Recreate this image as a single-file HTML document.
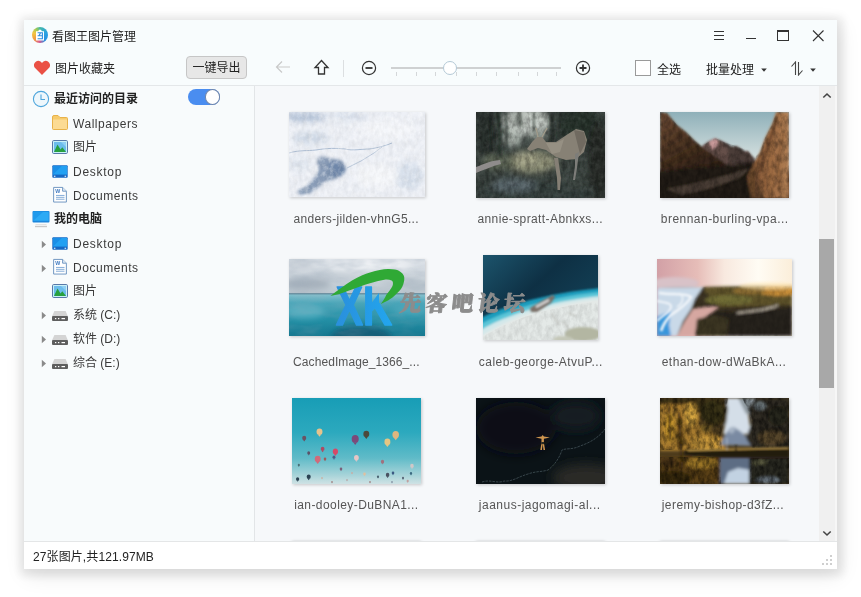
<!DOCTYPE html>
<html lang="zh-CN">
<head>
<meta charset="utf-8">
<title>看图王图片管理</title>
<style>
*{box-sizing:border-box;margin:0;padding:0}
html,body{width:861px;height:597px;overflow:hidden;background:#fff}
body{font-family:"Liberation Sans","Noto Sans CJK SC",sans-serif;font-size:12px;color:#333;position:relative}
.abs{position:absolute}
#win{will-change:transform;position:absolute;left:24px;top:20px;width:813px;height:549px;background:#f8fcfd;box-shadow:1px 2px 9px 5px rgba(0,0,0,.085),2px 6px 20px rgba(0,0,0,.10);overflow:hidden}
#top{position:absolute;left:0;top:0;width:813px;height:66px;background:#f8fcfd;border-bottom:1px solid #e4e7e9}
#side{position:absolute;left:0;top:66px;width:231px;height:455px;background:#f8fbfc;border-right:1px solid #e2e5e7}
#main{position:absolute;left:231px;top:66px;width:564px;height:455px;background:#f6f8fa;overflow:hidden}
#sbar{position:absolute;left:795px;top:66px;width:18px;height:455px;background:#f0f0f0;border-right:2px solid #f6f6f6}
#sthumb{position:absolute;left:0;top:153px;width:15px;height:149px;background:#a8a8a8}
#status{position:absolute;left:0;top:521px;width:813px;height:28px;background:#fff;border-top:1px solid #e4e6e7}
.t{position:absolute;white-space:nowrap;line-height:16px;height:16px}
.b{font-weight:bold;color:#222}
.lat{letter-spacing:.55px}
.row{position:absolute;left:0;width:230px;height:24px;color:#3a3a3a}
.lbl{position:absolute;width:180px;text-align:center;white-space:nowrap;line-height:16px;color:#555;letter-spacing:.45px;font-size:12px}
.th{position:absolute;box-shadow:1px 1px 3px rgba(0,0,0,.2);overflow:hidden}
.th svg{display:block}
</style>
</head>
<body>
<div id="win">
  <div id="top">
    <!-- app icon -->
    <div class="abs" style="left:8px;top:6.500px;width:16px;height:16px;border-radius:50%;background:conic-gradient(from 0deg,#45b8a8 0deg,#2aa2e2 70deg,#2a90e0 140deg,#d85a90 185deg,#f09a40 230deg,#f2c744 290deg,#8cc860 335deg,#45b8a8 360deg)"></div>
    <svg class="abs" style="left:8px;top:6.500px" width="16" height="16" viewBox="0 0 16 16">
      <path d="M4 4.200h2.200l.8-1.400h2l.8 1.400H12v9.300H4Z" fill="#fff"/>
      <path d="M5.600 5.800h4.800v6H5.600M5.600 8.800h4.800M8.600 5.800l-1.600 3" fill="none" stroke="#2f8fe0" stroke-width="1.100"/>
    </svg>
    <div class="t" style="left:28px;top:8.500px;color:#222">看图王图片管理</div>
    <!-- window buttons -->
    <svg class="abs" style="left:686px;top:8px" width="120" height="18" viewBox="0 0 120 18">
      <g stroke="#333" stroke-width="1" fill="none" shape-rendering="crispEdges">
        <path d="M4 3.5h10M4 7.5h10M4 11.5h10"/>
        <path d="M36 10.500h10"/>
        <rect x="67.500" y="3.500" width="11" height="9"/>
        <path d="M67 3h12" stroke-width="2"/>
      </g>
      <path d="M103 2.500l10.500 10.500M113.500 2.500l-10.500 10.500" stroke="#333" stroke-width="1.100" fill="none"/>
    </svg>
    <!-- heart -->
    <svg class="abs" style="left:9px;top:40px" width="18" height="16" viewBox="0 0 18 16">
      <path d="M9 15 L1.600 7.400 A4.100 4.100 0 0 1 9 2.900 A4.100 4.100 0 0 1 16.400 7.400Z" fill="#ea5145"/>
    </svg>
    <div class="t" style="left:31px;top:40.700px;color:#222">图片收藏夹</div>
    <!-- export button -->
    <div class="abs" style="left:162px;top:36px;width:61px;height:23px;background:#e7e7e7;border:1px solid #c6c6c6;border-radius:4px;text-align:center;line-height:23px;color:#222">一键导出</div>
    <!-- back arrow -->
    <svg class="abs" style="left:251px;top:40px" width="16" height="14" viewBox="0 0 16 14">
      <path d="M15 7H1.500M7 1.500L1.500 7L7 12.500" fill="none" stroke="#c9c9c9" stroke-width="1.200"/>
    </svg>
    <!-- up arrow -->
    <svg class="abs" style="left:289px;top:39px" width="17" height="17" viewBox="0 0 17 17">
      <path d="M8.500 1.500L15 8.500H11.500V15H5.500V8.500H2Z" fill="none" stroke="#333" stroke-width="1.300" stroke-linejoin="miter"/>
    </svg>
    <div class="abs" style="left:319px;top:40px;width:1px;height:17px;background:#dcdfe1"></div>
    <!-- minus -->
    <svg class="abs" style="left:337px;top:40px" width="16" height="16" viewBox="0 0 16 16">
      <circle cx="8" cy="8" r="6.600" fill="none" stroke="#333" stroke-width="1.200"/>
      <path d="M4.500 8h7" stroke="#333" stroke-width="1.800"/>
    </svg>
    <!-- slider -->
    <div class="abs" style="left:367px;top:47px;width:170px;height:2px;background:#cfd1d2"></div>
    <svg class="abs" style="left:367px;top:52px" width="170" height="5" viewBox="0 0 170 5">
      <path d="M5.500 0v4M25.500 0v4M44.500 0v4M65.500 0v4M85.500 0v4M105.500 0v4M127.500 0v4M146.500 0v4M165.500 0v4" stroke="#d4d7d9" stroke-width="1"/>
    </svg>
    <div class="abs" style="left:419px;top:41px;width:14px;height:14px;border-radius:50%;background:#fff;border:1px solid #b4c9d6"></div>
    <!-- plus -->
    <svg class="abs" style="left:551px;top:40px" width="16" height="16" viewBox="0 0 16 16">
      <circle cx="8" cy="8" r="6.600" fill="none" stroke="#333" stroke-width="1.200"/>
      <path d="M4.500 8h7M8 4.500v7" stroke="#333" stroke-width="1.800"/>
    </svg>
    <!-- checkbox -->
    <div class="abs" style="left:611px;top:40px;width:16px;height:16px;background:#fff;border:1px solid #9a9a9a"></div>
    <div class="t" style="left:633px;top:41.500px;color:#222">全选</div>
    <div class="t" style="left:682px;top:41.500px;color:#222">批量处理</div>
    <svg class="abs" style="left:736px;top:48px" width="8" height="5" viewBox="0 0 8 5"><path d="M1.200 .5h5.600L4 3.800Z" fill="#333"/></svg>
    <!-- sort -->
    <svg class="abs" style="left:766px;top:41px" width="14" height="15" viewBox="0 0 14 15">
      <path d="M5.500 14V1L1.500 5.500M8.500 1v13L12.500 9.500" fill="none" stroke="#444" stroke-width="1.100"/>
    </svg>
    <svg class="abs" style="left:785px;top:48px" width="8" height="5" viewBox="0 0 8 5"><path d="M1.200 .5h5.600L4 3.800Z" fill="#333"/></svg>
  </div>
  <div id="side">
    <div class="row" style="top:1px"><svg class="abs" style="left:8px;top:3px" width="18" height="18" viewBox="0 0 18 18"><circle cx="9" cy="9" r="7.600" fill="#eef7fc" stroke="#4fa6dc" stroke-width="1.100"/><path d="M9 4.500V9.500h4" fill="none" stroke="#4fa6dc" stroke-width="1.100"/></svg><div class="t b" style="left:30px;top:4px">最近访问的目录</div><div class="abs" style="left:164px;top:2px;width:32px;height:16px;border-radius:8px;background:#4a8df0"></div><div class="abs" style="left:181px;top:2.300px;width:15.200px;height:15.400px;border-radius:50%;background:#fff;border:1px solid #6f86ac"></div></div>
    <div class="row" style="top:25.5px"><svg class="abs" style="left:28px;top:3.500px" width="16" height="15" viewBox="0 0 16 15"><path d="M.5 2Q.5 .5 2 .5H6L8 2.500H14.500Q15.500 2.500 15.500 3.500V13.500Q15.500 14.500 14.500 14.500H1.500Q.5 14.500 .5 13.500Z" fill="#f7cb6c" stroke="#e8b24a" stroke-width="1"/><path d="M1 4.500H15V13.500Q15 14 14.500 14H1.500Q1 14 1 13.500Z" fill="#fcdb93"/></svg><div class="t lat" style="left:49px;top:4px">Wallpapers</div></div>
    <div class="row" style="top:49px"><svg class="abs" style="left:28px;top:5px" width="16" height="14" viewBox="0 0 16 14"><rect x=".5" y=".5" width="15" height="13" rx="1.200" fill="#c9f0f8" stroke="#5878a8" stroke-width="1"/><rect x="2" y="2" width="12" height="10" fill="#6cbcec"/><path d="M9 2h5v5Z" fill="#8fd0f4"/><path d="M2 12L5.500 4.500 8.500 9.500 10.300 7.300 14 12Z" fill="#27a03f"/></svg><div class="t" style="left:49px;top:4px">图片</div></div>
    <div class="row" style="top:73.5px"><svg class="abs" style="left:28px;top:4px" width="16" height="15" viewBox="0 0 17 16"><defs><linearGradient id="dg" x1="0" y1="0" x2="1" y2="1"><stop offset="0" stop-color="#29a3ec"/><stop offset="1" stop-color="#55c4f7"/></linearGradient></defs><rect x=".3" y="1.300" width="16.400" height="13.400" rx="1" fill="#1668c4"/><rect x="1" y="2" width="15" height="9.300" fill="#22a0f2"/><path d="M1 2h9.500L1 11.300Z" fill="#1a8ee6"/><path d="M2 13h1.600M13.400 13h1.600" stroke="#fff" stroke-width="1.100"/></svg><div class="t lat" style="left:49px;top:4px;letter-spacing:.72px">Desktop</div></div>
    <div class="row" style="top:97.5px"><svg class="abs" style="left:29px;top:2.700px" width="14.500" height="17" viewBox="0 0 15 18"><path d="M.5 1.500h9.500l4 4v11.500H.5Z" fill="#fff" stroke="#6a93bf" stroke-width="1"/><path d="M10 1.500v4h4" fill="#e3eef8" stroke="#6a93bf" stroke-width="1"/><path d="M3 10h9M3 12h9M3 14h9" stroke="#7fa9d6" stroke-width="1"/><text x="2.300" y="7.800" font-family="'Liberation Sans',sans-serif" font-weight="bold" font-size="5.600" fill="#3c78c0">W</text></svg><div class="t lat" style="left:49px;top:4px">Documents</div></div>
    <div class="row" style="top:121px"><svg class="abs" style="left:8px;top:3px" width="18" height="18" viewBox="0 0 18 18"><rect x=".5" y="1" width="17" height="11.500" rx="1" fill="#1b86dc"/><rect x="1.300" y="1.800" width="15.400" height="9" fill="#2caaf5"/><path d="M1.300 1.800h10L1.300 10.800Z" fill="#1f9aec"/><path d="M3 16.500h12" stroke="#c9c9c9" stroke-width="1.400"/><path d="M3.500 14.500h11" stroke="#e3e3e3" stroke-width="1"/></svg><div class="t b" style="left:30px;top:4px">我的电脑</div></div>
    <div class="row" style="top:145.5px"><svg class="abs" style="left:17px;top:8px" width="6" height="9" viewBox="0 0 6 9"><path d="M.8.800L5 4.500.8 8.200Z" fill="#8a8a8a"/></svg><svg class="abs" style="left:28px;top:4px" width="16" height="15" viewBox="0 0 17 16"><defs><linearGradient id="dg" x1="0" y1="0" x2="1" y2="1"><stop offset="0" stop-color="#29a3ec"/><stop offset="1" stop-color="#55c4f7"/></linearGradient></defs><rect x=".3" y="1.300" width="16.400" height="13.400" rx="1" fill="#1668c4"/><rect x="1" y="2" width="15" height="9.300" fill="#22a0f2"/><path d="M1 2h9.500L1 11.300Z" fill="#1a8ee6"/><path d="M2 13h1.600M13.400 13h1.600" stroke="#fff" stroke-width="1.100"/></svg><div class="t lat" style="left:49px;top:4px;letter-spacing:.72px">Desktop</div></div>
    <div class="row" style="top:169.5px"><svg class="abs" style="left:17px;top:8px" width="6" height="9" viewBox="0 0 6 9"><path d="M.8.800L5 4.500.8 8.200Z" fill="#8a8a8a"/></svg><svg class="abs" style="left:29px;top:2.700px" width="14.500" height="17" viewBox="0 0 15 18"><path d="M.5 1.500h9.500l4 4v11.500H.5Z" fill="#fff" stroke="#6a93bf" stroke-width="1"/><path d="M10 1.500v4h4" fill="#e3eef8" stroke="#6a93bf" stroke-width="1"/><path d="M3 10h9M3 12h9M3 14h9" stroke="#7fa9d6" stroke-width="1"/><text x="2.300" y="7.800" font-family="'Liberation Sans',sans-serif" font-weight="bold" font-size="5.600" fill="#3c78c0">W</text></svg><div class="t lat" style="left:49px;top:4px">Documents</div></div>
    <div class="row" style="top:193px"><svg class="abs" style="left:28px;top:5px" width="16" height="14" viewBox="0 0 16 14"><rect x=".5" y=".5" width="15" height="13" rx="1.200" fill="#c9f0f8" stroke="#5878a8" stroke-width="1"/><rect x="2" y="2" width="12" height="10" fill="#6cbcec"/><path d="M9 2h5v5Z" fill="#8fd0f4"/><path d="M2 12L5.500 4.500 8.500 9.500 10.300 7.300 14 12Z" fill="#27a03f"/></svg><div class="t" style="left:49px;top:4px">图片</div></div>
    <div class="row" style="top:217px"><svg class="abs" style="left:17px;top:8px" width="6" height="9" viewBox="0 0 6 9"><path d="M.8.800L5 4.500.8 8.200Z" fill="#8a8a8a"/></svg><svg class="abs" style="left:28px;top:8px" width="16" height="10" viewBox="0 0 16 10"><path d="M2.400 0H13.600L16 5.500H0Z" fill="#d4d4d4"/><rect x="0" y="5" width="16" height="5" rx="1" fill="#5e5e5e"/><rect x="3" y="7" width="1.300" height="1.200" fill="#fff"/><rect x="6" y="7" width="1.300" height="1.200" fill="#fff"/><rect x="9.500" y="7" width="3.500" height="1.200" fill="#fff"/></svg><div class="t" style="left:49px;top:4px;letter-spacing:0">系统 (C:)</div></div>
    <div class="row" style="top:241px"><svg class="abs" style="left:17px;top:8px" width="6" height="9" viewBox="0 0 6 9"><path d="M.8.800L5 4.500.8 8.200Z" fill="#8a8a8a"/></svg><svg class="abs" style="left:28px;top:8px" width="16" height="10" viewBox="0 0 16 10"><path d="M2.400 0H13.600L16 5.500H0Z" fill="#d4d4d4"/><rect x="0" y="5" width="16" height="5" rx="1" fill="#5e5e5e"/><rect x="3" y="7" width="1.300" height="1.200" fill="#fff"/><rect x="6" y="7" width="1.300" height="1.200" fill="#fff"/><rect x="9.500" y="7" width="3.500" height="1.200" fill="#fff"/></svg><div class="t" style="left:49px;top:4px;letter-spacing:0">软件 (D:)</div></div>
    <div class="row" style="top:265px"><svg class="abs" style="left:17px;top:8px" width="6" height="9" viewBox="0 0 6 9"><path d="M.8.800L5 4.500.8 8.200Z" fill="#8a8a8a"/></svg><svg class="abs" style="left:28px;top:8px" width="16" height="10" viewBox="0 0 16 10"><path d="M2.400 0H13.600L16 5.500H0Z" fill="#d4d4d4"/><rect x="0" y="5" width="16" height="5" rx="1" fill="#5e5e5e"/><rect x="3" y="7" width="1.300" height="1.200" fill="#fff"/><rect x="6" y="7" width="1.300" height="1.200" fill="#fff"/><rect x="9.500" y="7" width="3.500" height="1.200" fill="#fff"/></svg><div class="t" style="left:49px;top:4px;letter-spacing:0">综合 (E:)</div></div>
  </div>
  <div id="main">
<svg width="0" height="0" style="position:absolute"><defs>
<filter id="b1" x="-20%" y="-20%" width="140%" height="140%"><feGaussianBlur stdDeviation=".8"/></filter>
<filter id="b2" x="-20%" y="-20%" width="140%" height="140%"><feGaussianBlur stdDeviation="1.8"/></filter>
<filter id="b3" x="-30%" y="-30%" width="160%" height="160%"><feGaussianBlur stdDeviation="3"/></filter>
<filter id="b5" x="-40%" y="-40%" width="180%" height="180%"><feGaussianBlur stdDeviation="6"/></filter>
<filter id="nz" x="0" y="0" width="100%" height="100%"><feTurbulence type="fractalNoise" baseFrequency=".22 .14" numOctaves="3" seed="4"/><feColorMatrix type="matrix" values="0 0 0 0 0  0 0 0 0 0  0 0 0 0 0  1.6 0 0 0 -.52"/></filter>
<filter id="nw" x="0" y="0" width="100%" height="100%"><feTurbulence type="fractalNoise" baseFrequency=".2 .2" numOctaves="3" seed="9"/><feColorMatrix type="matrix" values="0 0 0 0 1  0 0 0 0 1  0 0 0 0 1  0 1.6 0 0 -.62"/></filter>
<filter id="nc" x="0" y="0" width="100%" height="100%"><feTurbulence type="fractalNoise" baseFrequency=".035 .09" numOctaves="3" seed="7"/><feColorMatrix type="matrix" values="0 0 0 0 .35  0 0 0 0 .42  0 0 0 0 .5  1.8 0 0 0 -.7"/></filter>
<filter id="bh" x="-5%" y="-5%" width="110%" height="110%"><feGaussianBlur stdDeviation=".45"/></filter>
</defs></svg>
<div class="th" style="left:33.5px;top:26px;width:136px;height:85px"><svg width="136" height="85" viewBox="0 0 136 85"><rect width="136" height="85" fill="#edf0f6"/>
<g filter="url(#b3)"><ellipse cx="16" cy="5" rx="22" ry="5" fill="#b4c3d8"/><ellipse cx="60" cy="4" rx="20" ry="4" fill="#d6deea"/><ellipse cx="22" cy="26" rx="18" ry="6" fill="#cfd9e6"/><ellipse cx="120" cy="64" rx="14" ry="14" fill="#d6dfeb"/><ellipse cx="98" cy="18" rx="30" ry="10" fill="#f4f6fa"/><ellipse cx="88" cy="64" rx="22" ry="12" fill="#f5f7fa"/><ellipse cx="10" cy="52" rx="12" ry="8" fill="#e0e6ef"/></g>
<g filter="url(#b2)"><path d="M28 47C32 42 38 46 42 47 52 46 59 52 57 58 54 66 44 67 36 70 28 78 16 84 8 82 16 76 28 66 30 56 28 52 27 50 28 47Z" fill="#8a9db8"/><ellipse cx="47" cy="57" rx="9" ry="8" fill="#7088aa"/><ellipse cx="16" cy="79" rx="7" ry="3" fill="#8398b4"/></g>
<g filter="url(#bh)" fill="none" stroke="#9fb3cc" stroke-width="1" opacity=".8"><path d="M0 41C10 38 18 39 27 38 38 36 48 36 56 37 64 39 72 37 80 37 88 36 96 34 103 31"/><path d="M58 56L72 49 85 41 93 35" opacity=".8"/></g>
<rect width="136" height="85" filter="url(#nw)" opacity=".55"/><rect width="136" height="85" filter="url(#nz)" opacity=".06"/></svg></div>
<div class="th" style="left:221px;top:26px;width:129px;height:86px"><svg width="129" height="86" viewBox="0 0 129 86"><rect width="129" height="86" fill="#39423e"/>
<g filter="url(#b3)"><ellipse cx="50" cy="10" rx="25" ry="14" fill="#c2c9c3"/><ellipse cx="36" cy="27" rx="10" ry="8" fill="#aab3ac"/><ellipse cx="62" cy="24" rx="8" ry="6" fill="#8d978f"/><ellipse cx="9" cy="20" rx="11" ry="24" fill="#29322e"/><ellipse cx="42" cy="8" rx="4" ry="6" fill="#59645c"/><ellipse cx="104" cy="14" rx="22" ry="18" fill="#27302c"/><ellipse cx="122" cy="50" rx="10" ry="40" fill="#252b28"/><ellipse cx="56" cy="50" rx="26" ry="11" fill="#93947a"/><ellipse cx="50" cy="46" rx="12" ry="6" fill="#a9a98c"/><ellipse cx="22" cy="50" rx="16" ry="8" fill="#5e6856"/><ellipse cx="60" cy="80" rx="60" ry="10" fill="#363f3c"/><ellipse cx="38" cy="73" rx="22" ry="7" fill="#5a686d"/><ellipse cx="100" cy="64" rx="12" ry="14" fill="#3d4642"/></g>
<g filter="url(#b1)" fill="none"><path d="M22 0L24 44" stroke="#2b342f" stroke-width="4"/><path d="M30 0L31 36" stroke="#39433d" stroke-width="2"/><path d="M76 0L77 32" stroke="#29322d" stroke-width="4.500"/><path d="M58 0v20M44 0l1 14" stroke="#566058" stroke-width="1.500"/><path d="M14 4l1 36" stroke="#232b27" stroke-width="3"/></g>
<rect width="129" height="86" filter="url(#nz)" opacity=".42"/><rect width="129" height="86" filter="url(#nw)" opacity=".1"/>
<g filter="url(#bh)"><path d="M51 37L56 30 61 25 66 25 70 30 80 30 92 22 100 17 108 19 111 28 108 40 100 47 90 48 80 45 70 38 62 36 54 39Z" fill="#878175"/><path d="M82 46l3 20-1 12h-2.500l-.500-12-3-20Z" fill="#857f74"/><path d="M103 40l-2 16-2 12h-2l2-14 0-12Z" fill="#7d7d79"/><path d="M62 25l-2-9M66 25l5-9" stroke="#a29c8b" stroke-width="1.300"/><path d="M0 55C8 52 14 49 24 48L25 52C16 54 8 58 0 61Z" fill="#8f8c8b"/><path d="M98 18L108 20 110 30 104 42Z" fill="#6f6a60"/><path d="M70 31L80 31 88 27 84 40 76 42Z" fill="#969083"/></g></svg></div>
<div class="th" style="left:405px;top:26px;width:129px;height:86px"><svg width="129" height="86" viewBox="0 0 129 86"><defs><linearGradient id="sk3" x1="0" y1="0" x2="0" y2="1"><stop offset="0" stop-color="#8fb0b9"/><stop offset=".5" stop-color="#cfdcdc"/></linearGradient><linearGradient id="cl3" x1="0" y1="0" x2="1" y2="0"><stop offset="0" stop-color="#7e5434"/><stop offset=".6" stop-color="#9c6a42"/><stop offset="1" stop-color="#b28055"/></linearGradient><linearGradient id="lm3" x1="0" y1="0" x2=".6" y2="1"><stop offset="0" stop-color="#6d4b35"/><stop offset=".55" stop-color="#46301f"/><stop offset="1" stop-color="#2a1e16"/></linearGradient></defs>
<rect width="129" height="86" fill="url(#sk3)"/>
<g filter="url(#b1)"><path d="M42 34L49 29 55 26 60 28 66 31 72 35 76 34 80 36 84 39 88 39 94 46 96 62 40 62Z" fill="#65504a"/><path d="M49 30L55 26.500 58 28 57 34 52 38Z" fill="#c99a9a"/><path d="M66 31L72 35 76 34 84 39 94 46 90 56 70 50Z" fill="#4b3d39"/><path d="M0 0L7 1 17 13 26 20 35 29 42 35 52 42 66 52 80 62 0 70Z" fill="url(#lm3)"/><path d="M-8 60L30 56 62 54 96 50 137 62V94H-8Z" fill="#231c16" filter="url(#b2)"/><path d="M6 77L36 71 66 63 90 56 80 66 52 76 22 83Z" fill="#4a3e35"/><path d="M129 0H116L112.500 11 105 26 100 40 93 52 87 65 91 86H129Z" fill="url(#cl3)"/><path d="M117 6L110 28 104 46 100 60" stroke="#5a3a24" stroke-width="2.500" fill="none" opacity=".8"/><path d="M124 20L118 50 120 80" stroke="#7c512f" stroke-width="2" fill="none" opacity=".7"/><path d="M93 52L87 65 91 86H104L98 66Z" fill="#5d3f28" opacity=".7"/></g>
<clipPath id="c3"><path d="M0 0L7 1 17 13 26 20 35 29 42 34 55 26 66 31 76 34 88 39 94 46 100 40 105 26 112.500 11 116 0H129V86H0Z"/></clipPath><g clip-path="url(#c3)"><rect width="129" height="86" filter="url(#nz)" opacity=".4"/></g></svg></div>
<div class="th" style="left:33.5px;top:173.3px;width:136px;height:76.5px"><svg width="136" height="76.5" viewBox="0 0 136 76.5"><defs><linearGradient id="sk4" x1="0" y1="0" x2="0" y2="1"><stop offset="0" stop-color="#dde2e8"/><stop offset="1" stop-color="#bcc7cf"/></linearGradient><linearGradient id="w4" x1="0" y1="0" x2="0" y2="1"><stop offset="0" stop-color="#86c2cf"/><stop offset=".22" stop-color="#49a5b8"/><stop offset=".6" stop-color="#2490a6"/><stop offset="1" stop-color="#167890"/></linearGradient></defs>
<rect width="136" height="36" fill="url(#sk4)"/><rect y="35" width="136" height="42" fill="url(#w4)"/>
<g filter="url(#b3)"><ellipse cx="18" cy="25" rx="24" ry="6" fill="#a5b0bb"/><ellipse cx="50" cy="18" rx="20" ry="4" fill="#c5cdd5"/><ellipse cx="80" cy="6" rx="44" ry="6" fill="#eef1f4"/><ellipse cx="116" cy="26" rx="24" ry="6" fill="#bcc6ce"/><ellipse cx="10" cy="6" rx="14" ry="5" fill="#c9d0d8"/><ellipse cx="72" cy="78" rx="30" ry="11" fill="#125f78"/><ellipse cx="16" cy="52" rx="20" ry="7" fill="#55aec0"/><ellipse cx="122" cy="50" rx="18" ry="6" fill="#4ba6ba"/></g>
<rect width="136" height="35" filter="url(#nc)" opacity=".55"/><rect y="36" width="136" height="41" filter="url(#nc)" opacity=".25"/>
<rect y="34" width="136" height="1.500" fill="#62889a" opacity=".85"/></svg></div>
<div class="th" style="left:228px;top:169px;width:115px;height:85px"><svg width="115" height="85" viewBox="0 0 115 85"><defs><linearGradient id="d5" x1="0" y1="0" x2="1" y2=".8"><stop offset="0" stop-color="#1c546c"/><stop offset=".45" stop-color="#0e3044"/><stop offset="1" stop-color="#14455b"/></linearGradient></defs>
<rect width="115" height="85" fill="url(#d5)"/>
<g filter="url(#b1)"><path d="M-4 64C14 54 38 47 56 43 78 38 98 35 119 33V90H-4Z" fill="#1f9dbd"/><path d="M-4 70C14 60 38 52 56 48 78 42 98 39 119 37V90H-4Z" fill="#5cc6d8"/><path d="M-4 76C16 64 40 56 58 51.500 80 46 98 43 119 41V90H-4Z" fill="#d3e8ea"/><path d="M-4 82C18 68 42 59 60 54.500 82 49 98 46 119 44V90H-4Z" fill="#e4e9e7"/></g>
<clipPath id="c5"><path d="M-4 84C18 70 42 61 60 56.500 82 51 98 48 119 46V90H-4Z"/></clipPath><g clip-path="url(#c5)"><rect width="115" height="85" filter="url(#nz)" opacity=".12"/></g>
<g filter="url(#b1)"><path d="M47 53L60 45 70 40 72 42 68 48 54 57 48 57Z" fill="#7c6f68"/><path d="M53 52L66 45" stroke="#dcdcdc" stroke-width="2"/><path d="M85 58l8 3M68 58l8 12M80 66l6 8" stroke="#a9aaa4" stroke-width=".9"/><ellipse cx="100" cy="79" rx="18" ry="7" fill="#b3b6a2"/><ellipse cx="80" cy="84" rx="10" ry="3" fill="#c4c7b8"/></g></svg></div>
<div class="th" style="left:402px;top:173.4px;width:135px;height:76.5px"><svg width="135" height="76.5" viewBox="0 0 135 76.5"><defs><linearGradient id="s6" x1="0" y1="0" x2="1" y2="0"><stop offset="0" stop-color="#d2a0a6"/><stop offset=".3" stop-color="#e6bdb8"/><stop offset=".5" stop-color="#f8e9df"/><stop offset=".75" stop-color="#fffcf4"/><stop offset="1" stop-color="#fbeeda"/></linearGradient></defs>
<rect width="135" height="77" fill="url(#s6)"/>
<g filter="url(#b2)"><ellipse cx="18" cy="24" rx="24" ry="6" fill="#d8c2c8"/><path d="M0 29L44 28 135 27V77H0Z" fill="#3a3220"/><path d="M44 28L135 27V46L62 48Z" fill="#5f5229"/><ellipse cx="122" cy="32" rx="22" ry="5" fill="#c68d38"/><ellipse cx="92" cy="32" rx="16" ry="3.500" fill="#8a6c30"/><ellipse cx="72" cy="41" rx="24" ry="5" fill="#6f6c36"/><path d="M0 29L46 28 38 40 34 50 26 62 20 77H0Z" fill="#c9d9e8"/><path d="M0 58L14 52 12 66 14 77H0Z" fill="#3796db"/><path d="M36 50L50 48 62 48 48 58 40 68 38 77H20L28 62Z" fill="#d6a7a1"/><path d="M48 58L62 52 90 54 135 48V77H38L40 68Z" fill="#25201a"/><path d="M40 60L58 56 72 60 70 77H38Z" fill="#3b3521"/><path d="M80 54L104 51 117 48 121 46" stroke="#ddd3c4" stroke-width="1.600" fill="none"/></g>
<clipPath id="c6"><path d="M46 28L135 27V77H38L40 68 48 58 62 48 36 50 38 40Z"/></clipPath><g clip-path="url(#c6)"><rect width="135" height="77" filter="url(#nz)" opacity=".2"/></g>
<ellipse cx="112" cy="27" rx="30" ry="4" fill="#ffe6b4" opacity=".55" filter="url(#b2)"/>
<g filter="url(#b1)" fill="none" stroke="#f1f5f9"><path d="M2 34C14 36 30 34 34 38 30 46 22 50 14 56 8 62 6 66 4 72" stroke-width="2.500"/><path d="M0 42C10 44 18 44 12 52 8 56 4 58 0 62" stroke-width="2"/><path d="M22 34C28 38 26 44 20 48" stroke-width="1.500"/></g></svg></div>
<div class="th" style="left:37px;top:311.8px;width:129px;height:86.2px"><svg width="129" height="86.2" viewBox="0 0 129 86.2"><defs><linearGradient id="s7" x1="0" y1="0" x2="0" y2="1"><stop offset="0" stop-color="#189db6"/><stop offset=".4" stop-color="#2ca9be"/><stop offset=".7" stop-color="#60bbc8"/><stop offset=".9" stop-color="#a8d4d9"/><stop offset="1" stop-color="#cfe2e4"/></linearGradient></defs>
<rect width="129" height="86" fill="url(#s7)"/><g filter="url(#bh)"><ellipse cx="27.5" cy="33.7" rx="2.95" ry="3.3" fill="#e6c38c"/><path d="M26.025 36.7L27.5 38.7 28.975 36.7Z" fill="#e6c38c"/><ellipse cx="12.2" cy="40" rx="2.05" ry="2.3" fill="#6b5263"/><path d="M11.174999999999999 42.0L12.2 43.5 13.225 42.0Z" fill="#6b5263"/><ellipse cx="63.2" cy="40.9" rx="3.53" ry="3.95" fill="#7b4a7a"/><path d="M61.435 44.4L63.2 46.9 64.965 44.4Z" fill="#7b4a7a"/><ellipse cx="74.3" cy="36" rx="2.95" ry="3.3" fill="#4c4a3a"/><path d="M72.825 39.0L74.3 41.0 75.77499999999999 39.0Z" fill="#4c4a3a"/><ellipse cx="103.7" cy="36.7" rx="3.28" ry="3.67" fill="#ddb680"/><path d="M102.06 40.0L103.7 42.3 105.34 40.0Z" fill="#ddb680"/><ellipse cx="95.4" cy="43.9" rx="2.95" ry="3.3" fill="#e6c682"/><path d="M93.92500000000001 46.9L95.4 48.9 96.875 46.9Z" fill="#e6c682"/><ellipse cx="30.6" cy="51" rx="1.89" ry="2.12" fill="#b04a62"/><path d="M29.655 52.9L30.6 54.2 31.545 52.9Z" fill="#b04a62"/><ellipse cx="43.4" cy="53.5" rx="2.62" ry="2.93" fill="#d64a68"/><path d="M42.089999999999996 56.1L43.4 58.0 44.71 56.1Z" fill="#d64a68"/><ellipse cx="16.7" cy="55" rx="1.48" ry="1.66" fill="#5c5269"/><path d="M15.959999999999999 56.5L16.7 57.5 17.439999999999998 56.5Z" fill="#5c5269"/><ellipse cx="25.7" cy="61" rx="2.95" ry="3.3" fill="#d06a7a"/><path d="M24.224999999999998 64.0L25.7 66.0 27.175 64.0Z" fill="#d06a7a"/><ellipse cx="33" cy="61" rx="1.31" ry="1.47" fill="#a05a5a"/><path d="M32.345 62.3L33 63.2 33.655 62.3Z" fill="#a05a5a"/><ellipse cx="42" cy="59.2" rx="1.48" ry="1.66" fill="#4b5c8a"/><path d="M41.26 60.7L42 61.7 42.74 60.7Z" fill="#4b5c8a"/><ellipse cx="64.4" cy="59.8" rx="2.38" ry="2.67" fill="#e6c6c6"/><path d="M63.21000000000001 62.2L64.4 63.8 65.59 62.2Z" fill="#e6c6c6"/><ellipse cx="90.5" cy="63.7" rx="1.64" ry="1.84" fill="#a0727f"/><path d="M89.68 65.3L90.5 66.5 91.32 65.3Z" fill="#a0727f"/><ellipse cx="120" cy="67.9" rx="1.8" ry="2.02" fill="#d0c8c8"/><path d="M119.1 69.7L120 71.0 120.9 69.7Z" fill="#d0c8c8"/><ellipse cx="6.8" cy="67" rx="1.07" ry="1.2" fill="#4a7078"/><path d="M6.265 68.1L6.8 68.8 7.335 68.1Z" fill="#4a7078"/><ellipse cx="49" cy="71" rx="1.31" ry="1.47" fill="#7a607a"/><path d="M48.345 72.3L49 73.2 49.655 72.3Z" fill="#7a607a"/><ellipse cx="16.7" cy="78.7" rx="2.05" ry="2.3" fill="#2c4252"/><path d="M15.674999999999999 80.8L16.7 82.2 17.724999999999998 80.8Z" fill="#2c4252"/><ellipse cx="5.6" cy="81" rx="1.64" ry="1.84" fill="#2c4252"/><path d="M4.779999999999999 82.6L5.6 83.8 6.42 82.6Z" fill="#2c4252"/><ellipse cx="95.6" cy="76.9" rx="1.8" ry="2.02" fill="#4a5262"/><path d="M94.69999999999999 78.7L95.6 80.0 96.5 78.7Z" fill="#4a5262"/><ellipse cx="101" cy="75" rx="1.31" ry="1.47" fill="#3a5a82"/><path d="M100.345 76.3L101 77.2 101.655 76.3Z" fill="#3a5a82"/><ellipse cx="86" cy="78.7" rx="1.07" ry="1.2" fill="#4a6272"/><path d="M85.465 79.8L86 80.5 86.535 79.8Z" fill="#4a6272"/><ellipse cx="119" cy="75.4" rx="1.15" ry="1.29" fill="#3a6a80"/><path d="M118.425 76.6L119 77.4 119.575 76.6Z" fill="#3a6a80"/><ellipse cx="111" cy="80" rx="1.07" ry="1.2" fill="#5a6a7a"/><path d="M110.465 81.1L111 81.8 111.535 81.1Z" fill="#5a6a7a"/><ellipse cx="115.7" cy="83" rx="1.07" ry="1.2" fill="#c0a0a0"/><path d="M115.165 84.1L115.7 84.8 116.235 84.1Z" fill="#c0a0a0"/><ellipse cx="72.5" cy="76" rx="1.31" ry="1.47" fill="#e0c0a0"/><path d="M71.845 77.3L72.5 78.2 73.155 77.3Z" fill="#e0c0a0"/><ellipse cx="60" cy="75" rx="0.82" ry="0.92" fill="#c9a9a0"/><path d="M59.59 75.8L60 76.4 60.41 75.8Z" fill="#c9a9a0"/><ellipse cx="30" cy="80" rx="0.82" ry="0.92" fill="#c9b0a0"/><path d="M29.59 80.8L30 81.4 30.41 80.8Z" fill="#c9b0a0"/><ellipse cx="40" cy="84" rx="0.82" ry="0.92" fill="#a08080"/><path d="M39.59 84.8L40 85.4 40.41 84.8Z" fill="#a08080"/><ellipse cx="78" cy="84" rx="0.82" ry="0.92" fill="#a08080"/><path d="M77.59 84.8L78 85.4 78.41 84.8Z" fill="#a08080"/><ellipse cx="55" cy="82" rx="0.74" ry="0.83" fill="#b09090"/><path d="M54.63 82.7L55 83.3 55.37 82.7Z" fill="#b09090"/><ellipse cx="100" cy="84" rx="0.82" ry="0.92" fill="#8090a0"/><path d="M99.59 84.8L100 85.4 100.41 84.8Z" fill="#8090a0"/></g></svg></div>
<div class="th" style="left:221px;top:311.8px;width:129px;height:86px"><svg width="129" height="86" viewBox="0 0 129 86"><rect width="129" height="86" fill="#0b1317"/>
<g filter="url(#b5)"><ellipse cx="110" cy="80" rx="34" ry="14" fill="#2a2a25"/><ellipse cx="40" cy="30" rx="40" ry="26" fill="#090f13"/><ellipse cx="100" cy="18" rx="24" ry="14" fill="#121e23"/></g>
<g filter="url(#bh)"><path d="M6 84C14 81 22 86 28 83 36 84 44 78 52 76 60 73 66 74 72 72 80 66 84 58 86 52 90 50 96 52 104 48 116 44 124 38 129 31" fill="none" stroke="#4a5a5f" stroke-width="1" stroke-dasharray="2.500 1" opacity=".7"/><path d="M59.500 39.500l6-1 1.200-1.500 1.200 1.500 6 1-6 1.300v4.200l1.200 7h-1.600l-.800-6-.800 6h-1.600l1.200-7v-4.200Z" fill="#cf9650"/><rect x="65.300" y="44" width="2.800" height="2.200" fill="#2a2a22"/></g></svg></div>
<div class="th" style="left:405px;top:311.8px;width:129px;height:86px"><svg width="129" height="86" viewBox="0 0 129 86"><rect width="129" height="86" fill="#4a3a1e"/>
<g filter="url(#b2)"><path d="M67 0H80L88 14 91 36H63L67 18Z" fill="#d4dee8"/><path d="M78 0H112L106 14 86 16Z" fill="#8f9aa0"/>
<path d="M0 6H26L38 4 40 30 64 40 66 53H0Z" fill="#a67a2e"/><ellipse cx="31" cy="16" rx="6" ry="12" fill="#d6a640"/><ellipse cx="48" cy="45" rx="17" ry="7" fill="#c8983a"/><ellipse cx="10" cy="30" rx="6" ry="14" fill="#c2922f"/><ellipse cx="20" cy="38" rx="5" ry="12" fill="#7a5a22"/>
<path d="M0 0H64L68 10 66 26 54 30 42 22 34 4 26 6H0Z" fill="#3e3218"/><ellipse cx="52" cy="14" rx="12" ry="12" fill="#383018"/><ellipse cx="46" cy="30" rx="6" ry="5" fill="#6a5424"/>
<path d="M60 47L64 38 70 30 74 29 80 33 86 38 92 40V48Z" fill="#7a8aa2"/><path d="M68 33L72 29.500 76 31 72 36Z" fill="#a9b6c6"/>
<path d="M129 0H96L88 10 92 24 86 40 92 50H129Z" fill="#2e2c20"/><ellipse cx="112" cy="40" rx="14" ry="8" fill="#54452c"/><ellipse cx="100" cy="8" rx="6" ry="4" fill="#6f7a7e"/><ellipse cx="118" cy="18" rx="10" ry="10" fill="#26251c"/>
<path d="M0 58H60V86H0Z" fill="#5a4018"/><ellipse cx="42" cy="65" rx="16" ry="6" fill="#9a7428"/><ellipse cx="14" cy="80" rx="18" ry="7" fill="#38290f"/><ellipse cx="8" cy="64" rx="8" ry="5" fill="#463312"/>
<path d="M60 58H90V86H60Z" fill="#5d6d84"/><path d="M64 86L68 74 78 70 90 72V86Z" fill="#c2d2e2"/>
<path d="M89 58H129V86H89Z" fill="#2a2a24"/><ellipse cx="108" cy="82" rx="12" ry="3" fill="#6f7c86"/><ellipse cx="100" cy="64" rx="8" ry="2.500" fill="#5a5a40"/></g>
<clipPath id="c9"><path d="M0 0H68L65 18 61 36 62 52H0ZM0 59H61V86H0ZM129 0H82L89 14 92 36 92 50H129ZM129 60H90V86H129Z"/></clipPath>
<g clip-path="url(#c9)"><rect width="129" height="86" filter="url(#nz)" opacity=".7"/></g>
<g filter="url(#b1)"><path d="M24 53L129 51V59.500L60 59.500 24 57Z" fill="#221c10"/><path d="M28 52.300L128 49.800" stroke="#c7a150" stroke-width="1.200"/><path d="M19 14L22 70" stroke="#35280f" stroke-width="1.500"/><path d="M9 6L10 40" stroke="#4a3614" stroke-width="1.200"/><path d="M76 47v5" stroke="#2a2418" stroke-width="1.500"/><path d="M67 40v12" stroke="#dfe6ee" stroke-width=".8" opacity=".7"/></g></svg></div>
<div class="th" style="left:37px;top:455.500px;width:129px;height:20px;background:#e4e9ed;box-shadow:0 0 3px rgba(0,0,0,.4)"></div><div class="th" style="left:221px;top:455.500px;width:129px;height:20px;background:#e4e9ed;box-shadow:0 0 3px rgba(0,0,0,.4)"></div><div class="th" style="left:405px;top:455.500px;width:129px;height:20px;background:#e4e9ed;box-shadow:0 0 3px rgba(0,0,0,.4)"></div>
<div class="lbl" style="left:11.2px;top:125px;letter-spacing:0.34px">anders-jilden-vhnG5...</div><div class="lbl" style="left:195.2px;top:125px;letter-spacing:0.4px">annie-spratt-Abnkxs...</div><div class="lbl" style="left:379.7px;top:125px;letter-spacing:0.47px">brennan-burling-vpa...</div><div class="lbl" style="left:11.3px;top:268px;letter-spacing:0.09px">CachedImage_1366_...</div><div class="lbl" style="left:195.8px;top:268px;letter-spacing:0.45px">caleb-george-AtvuP...</div><div class="lbl" style="left:379.0px;top:268px;letter-spacing:0.43px">ethan-dow-dWaBkA...</div><div class="lbl" style="left:11.4px;top:411px;letter-spacing:0.42px">ian-dooley-DuBNA1...</div><div class="lbl" style="left:194.7px;top:411px;letter-spacing:0.49px">jaanus-jagomagi-al...</div><div class="lbl" style="left:377.9px;top:411px;letter-spacing:0.42px">jeremy-bishop-d3fZ...</div>
<svg class="abs" style="left:70px;top:174px" width="210" height="70" viewBox="0 0 210 70">
<defs><linearGradient id="xk" x1="0" y1="0" x2="1" y2="0"><stop offset="0" stop-color="#2a8fdc"/><stop offset="1" stop-color="#22a6ee"/></linearGradient></defs>
<clipPath id="ck"><path d="M0 0H54V70H0ZM54 43H90V70H54Z"/></clipPath>
<g clip-path="url(#ck)"><text x="11" y="64.700" font-family="'Liberation Sans',sans-serif" font-weight="bold" font-size="55" textLength="56" lengthAdjust="spacingAndGlyphs" fill="url(#xk)" stroke="url(#xk)" stroke-width="1.600" stroke-linejoin="round">XK</text></g>
<path d="M5.400 35.900C12 31 20 25 27 20.600 34 16.500 40 14 45 12.500 52 10 58 9 63 8.900 68 8.800 72 9.500 73.800 10.700 77 12.500 79 15 79.200 17 79.500 20 79 22 78.300 24.200 77 28 75 30.500 72 33.200 69 36.500 66 38.500 63 40.400L55.800 44C58 41 60 38 61.200 35 63.500 32 66 29 67.500 26 68.500 23.500 68 21.500 66.600 20.600 64.500 19.500 62 19.300 59.400 19.700 54 20.500 50 21.500 45 23.300 38 25.500 32 27.500 27 29.600 22 31.300 18 32.800 14.400 34.100Z" fill="#2fa935"/>
<text x="75" y="51.500" font-family="'Noto Serif CJK SC','Noto Sans CJK SC',serif" font-weight="900" font-size="21.500" letter-spacing="4.500" fill="#8c8c8c" stroke="#8c8c8c" stroke-width=".9" stroke-linejoin="round" transform="translate(4.500 0) skewX(-6)">先客吧论坛</text>
</svg>
  </div>
  <div id="sbar"><div id="sthumb"></div>
    <svg class="abs" style="left:3px;top:6px" width="10" height="7" viewBox="0 0 10 7"><path d="M1.300 5.500L5 2 8.700 5.500" fill="none" stroke="#444" stroke-width="1.600"/></svg>
    <svg class="abs" style="left:3px;top:444px" width="10" height="7" viewBox="0 0 10 7"><path d="M1.300 1.500L5 5 8.700 1.500" fill="none" stroke="#444" stroke-width="1.600"/></svg>
  </div>
  <div id="status"><div class="t" style="left:9px;top:7px;color:#222;letter-spacing:.1px">27张图片,共121.97MB</div>
    <svg class="abs" style="left:798px;top:13px" width="12" height="11" viewBox="0 0 12 11"><g fill="#cfcfcf"><rect x="8" y="0" width="2" height="2"/><rect x="4" y="4" width="2" height="2"/><rect x="8" y="4" width="2" height="2"/><rect x="0" y="8" width="2" height="2"/><rect x="4" y="8" width="2" height="2"/><rect x="8" y="8" width="2" height="2"/></g></svg></div>
</div>
</body>
</html>
